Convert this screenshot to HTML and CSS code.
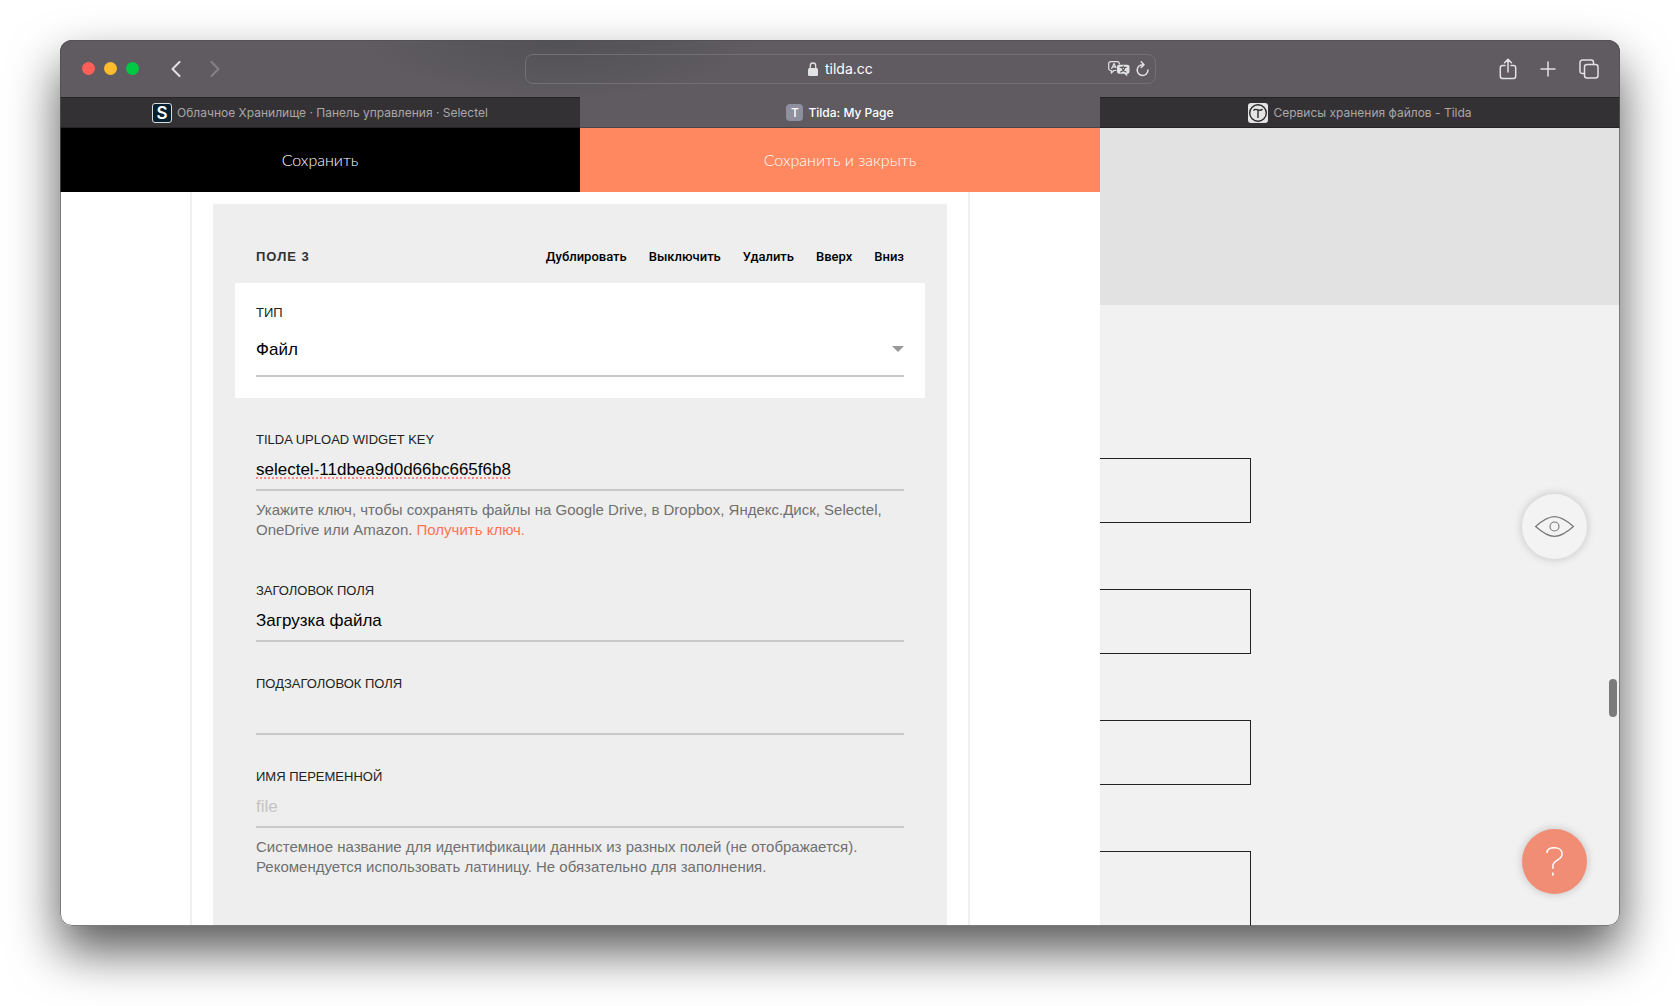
FILE: index.html
```html
<!DOCTYPE html>
<html lang="ru">
<head>
<meta charset="utf-8">
<title>Tilda: My Page</title>
<link rel="stylesheet" href="styles.css">
</head>
<body>
<div class="window">
  <header class="toolbar">
    <div class="toolbar-start">
      <div class="lights">
        <button class="light light-close" aria-label="Закрыть"></button>
        <button class="light light-minimize" aria-label="Свернуть"></button>
        <button class="light light-zoom" aria-label="Развернуть"></button>
      </div>
      <nav class="history">
        <button class="icon-button" aria-label="Назад"><svg width="10" height="16" viewBox="0 0 10 16"><path d="M8.5 1 1.5 8l7 7"/></svg></button>
        <button class="icon-button is-disabled" aria-label="Вперёд"><svg width="10" height="16" viewBox="0 0 10 16"><path d="m1.500 1 7 7-7 7"/></svg></button>
      </nav>
    </div>
    <form class="address">
      <span class="address-side"></span>
      <span class="address-main">
        <svg width="10" height="14" viewBox="0 0 10 14"><rect class="lock-body" y="6" width="10" height="8" rx="1.500"/><path class="lock-arc" d="M2.300 6.500V3.700a2.700 2.700 0 0 1 5.400 0v2.800"/></svg>
        <input class="address-input" type="text" value="tilda.cc" aria-label="Адрес">
      </span>
      <span class="address-side address-tools">
        <button type="button" class="icon-button" aria-label="Перевести"><svg width="22" height="16" viewBox="0 0 22 16"><path class="thin" d="M8 9.500H5.800L3.300 12V9.500H2.700a2 2 0 0 1-2-2V2.700a2 2 0 0 1 2-2h6.600a2 2 0 0 1 2 2V3"/><path class="thin" d="m3.700 7.500 2.300-5 2 4.200M4.500 5.900h3"/><path class="solid" d="M11 3.700h8.500a2 2 0 0 1 2 2v5a2 2 0 0 1-2 2h-.3V15.500l-2.800-2.800H11a2 2 0 0 1-2-2v-5a2 2 0 0 1 2-2z"/><path class="cut" d="M12.200 6.400h6M15.200 5v1.400M17 6.600c-.6 2-2 3.500-4.500 4.400M13.600 6.600c.6 2 2 3.500 4.400 4.400"/></svg></button>
        <button type="button" class="icon-button" aria-label="Обновить"><svg width="13" height="16" viewBox="0 0 13 16"><path class="medium" d="M7 3.700a5.400 5.400 0 1 0 5 5.400M5.200.8 8 3.700 5.200 6.500"/></svg></button>
      </span>
    </form>
    <div class="toolbar-end">
      <button class="icon-button" aria-label="Поделиться"><svg width="18" height="22" viewBox="0 0 18 22"><path class="medium" d="M6 7.500H3.500a2.200 2.200 0 0 0-2.200 2.200v8.600a2.200 2.200 0 0 0 2.200 2.200h11a2.200 2.200 0 0 0 2.200-2.200V9.700a2.200 2.200 0 0 0-2.200-2.200H12M9 14V1.300M5.500 4.700 9 1.200l3.500 3.500"/></svg></button>
      <button class="icon-button" aria-label="Новая вкладка"><svg width="16" height="16" viewBox="0 0 16 16"><path class="medium" d="M8 1v14M1 8h14"/></svg></button>
      <button class="icon-button" aria-label="Все вкладки"><svg width="20" height="20" viewBox="0 0 20 20"><rect class="medium" x="5.500" y="5.500" width="13.500" height="13.500" rx="2.500"/><path class="medium" d="M5.500 14.500H3.300A2.300 2.300 0 0 1 1 12.200V3.300A2.300 2.300 0 0 1 3.300 1h8.900a2.300 2.300 0 0 1 2.300 2.300v2.200"/></svg></button>
    </div>
  </header>

  <nav class="tabs">
    <a class="tab" href="#storage"><span class="favicon favicon-s">S</span>Облачное Хранилище · Панель управления · Selectel</a>
    <a class="tab is-active" href="#page"><span class="favicon favicon-t">T</span>Tilda: My Page</a>
    <a class="tab" href="#help"><svg class="favicon-tilda" width="20" height="20" viewBox="0 0 20 20"><rect class="plate" width="20" height="20" rx="3"/><circle cx="10" cy="10" r="8.300"/><path d="M5.500 7.600c1.500-2 3-1.300 4.500-.7s3 .8 4.500-.6M10 7v8"/></svg>Сервисы хранения файлов - Tilda</a>
  </nav>

  <main class="content">
    <section class="editor">
      <div class="editor-actions">
        <button class="action action-save">Сохранить</button>
        <button class="action action-close">Сохранить и закрыть</button>
      </div>
      <form class="sheet">
        <fieldset class="card">
          <div class="card-head">
            <h2 class="card-title">ПОЛЕ 3</h2>
            <div class="card-menu">
              <button type="button" class="card-link">Дублировать</button>
              <button type="button" class="card-link">Выключить</button>
              <button type="button" class="card-link">Удалить</button>
              <button type="button" class="card-link">Вверх</button>
              <button type="button" class="card-link">Вниз</button>
            </div>
          </div>
          <div class="type-box">
            <label class="label" for="type">ТИП</label>
            <div class="select-wrap">
              <select class="control select" id="type"><option>Файл</option></select>
              <span class="caret"></span>
            </div>
          </div>
          <div class="field">
            <label class="label" for="key">TILDA UPLOAD WIDGET KEY</label>
            <input class="control misspelled" id="key" type="text" value="selectel-11dbea9d0d66bc665f6b8">
            <p class="hint">Укажите ключ, чтобы сохранять файлы на Google Drive, в Dropbox, Яндекс.Диск, Selectel,<br>OneDrive или Amazon. <a class="hint-link" href="#key">Получить ключ.</a></p>
          </div>
          <div class="field">
            <label class="label" for="title">ЗАГОЛОВОК ПОЛЯ</label>
            <input class="control" id="title" type="text" value="Загрузка файла">
          </div>
          <div class="field">
            <label class="label" for="subtitle">ПОДЗАГОЛОВОК ПОЛЯ</label>
            <input class="control" id="subtitle" type="text">
          </div>
          <div class="field">
            <label class="label" for="name">ИМЯ ПЕРЕМЕННОЙ</label>
            <input class="control" id="name" type="text" placeholder="file">
            <p class="hint">Системное название для идентификации данных из разных полей (не отображается).<br>Рекомендуется использовать латиницу. Не обязательно для заполнения.</p>
          </div>
        </fieldset>
      </form>
    </section>

    <section class="preview">
      <div class="preview-cover"></div>
      <div class="preview-form">
        <div class="preview-box"></div>
        <div class="preview-box"></div>
        <div class="preview-box"></div>
        <div class="preview-box is-tall"></div>
      </div>
      <button class="round-button eye-button" aria-label="Просмотр"><svg width="41" height="23" viewBox="0 0 42 24"><path d="M1.300 12C8 6 14.500 1.700 21 1.700S34 6 40.700 12C34 18 27.500 22.300 21 22.300S8 18 1.300 12z"/><circle cx="21" cy="12" r="4.700"/></svg></button>
      <button class="round-button help-button" aria-label="Помощь"><svg width="19" height="31" viewBox="0 0 20 32"><path d="M2 7C2 3.300 5.500 1.500 10 1.500s8 2.500 8 6.500c0 3-2 4.700-4.500 6.200C10 16.300 8.300 18 8.300 20.500V23.500M8.300 27.500v3.500"/></svg></button>
      <div class="scroll-thumb"></div>
    </section>
  </main>
</div>
</body>
</html>
```
FILE: styles.css
```css
* { box-sizing: border-box; }

body {
  margin: 0;
  padding: 40px 60px 80px;
  height: 100vh;
  background: #fff;
  font-family: "Liberation Sans", Arial, sans-serif;
  color: #000;
}

button, input, select { font: inherit; color: inherit; }
button { padding: 0; border: 0; background: none; }
svg { display: block; fill: none; }

.window {
  position: relative;
  display: flex;
  flex-direction: column;
  height: 100%;
  overflow: hidden;
  border-radius: 12px;
  background: #5f5b60;
  box-shadow: 0 25px 50px rgba(0, 0, 0, 0.66);
}
.window::after {
  content: "";
  position: absolute;
  inset: 0;
  border: 1px solid rgba(80, 80, 80, 0.75);
  border-radius: 12px;
  pointer-events: none;
}

/* Browser toolbar */
.toolbar {
  display: grid;
  grid-template-columns: 1fr minmax(0, 631px) 1fr;
  align-items: center;
  flex: none;
  height: 57px;
  padding: 0 21px 0 22px;
  background: radial-gradient(ellipse 190px 60px at 32% 0, #525155, transparent), #5f5b60;
  font-family: Inter, sans-serif;
}
.toolbar-start, .lights, .history, .toolbar-end { display: flex; align-items: center; }
.toolbar-start { gap: 32px; }
.lights { gap: 9px; }
.light { width: 13px; height: 13px; border-radius: 50%; }
.light-close { background: #ff5f57; }
.light-minimize { background: #febc2e; }
.light-zoom { background: #00ca44; }
.history { gap: 29px; }
.icon-button svg { stroke: #e2e1e3; stroke-width: 2; stroke-linecap: round; stroke-linejoin: round; }
.icon-button.is-disabled svg { stroke: #858287; }
.icon-button svg .medium { stroke-width: 1.5; }
.icon-button svg .thin { stroke-width: 1.2; }
.icon-button svg .solid { fill: #e2e1e3; stroke: none; }
.icon-button svg .cut { stroke: #5f5b60; stroke-width: 1.2; }
.toolbar-end { justify-content: flex-end; gap: 23px; }

.address {
  display: grid;
  grid-template-columns: 1fr auto 1fr;
  align-items: center;
  height: 30px;
  padding: 0 6px;
  border: 1px solid #727074;
  border-radius: 8px;
}
.address-main { display: flex; align-items: center; gap: 7px; }
.lock-body { fill: #e2e1e3; }
.lock-arc { stroke: #e2e1e3; stroke-width: 1.3; }
.address-input {
  width: 48px;
  padding: 0;
  border: 0;
  background: none;
  color: #fff;
  font-size: 14px;
}
.address-tools { display: flex; justify-content: flex-end; align-items: center; gap: 6px; }

/* Tab strip */
.tabs {
  display: grid;
  grid-template-columns: repeat(3, 1fr);
  flex: none;
  height: 31px;
  font-family: Inter, sans-serif;
  font-size: 12px;
}
.tab {
  display: flex;
  align-items: center;
  justify-content: center;
  gap: 5px;
  min-width: 0;
  border-top: 1px solid #252326;
  border-bottom: 1px solid #252326;
  background: #343134;
  color: #a9a7aa;
  text-decoration: none;
  white-space: nowrap;
}
.tab.is-active {
  border-top-color: transparent;
  border-bottom-color: #484548;
  background: #5f5b60;
  color: #fff;
  font-weight: 500;
}
.favicon { text-align: center; }
.favicon-s {
  width: 20px;
  height: 20px;
  border: 1px solid #d8dbdc;
  border-radius: 3px;
  background: #06202f;
  color: #fff;
  font-size: 17px;
  font-weight: 600;
  line-height: 18px;
}
.favicon-t {
  width: 17px;
  height: 17px;
  border-radius: 4px;
  background: #8e90a0;
  font-size: 12px;
  line-height: 17px;
}
.favicon-tilda { stroke: #2c2a2c; stroke-width: 1.4; }
.favicon-tilda .plate { fill: #e4e4e4; stroke: none; }

/* Page area */
.content { display: grid; grid-template-columns: 2fr 1fr; flex: 1; min-height: 0; }
.editor { min-height: 0; overflow: hidden; background: #fff; }
.editor-actions { display: grid; grid-template-columns: 1fr 1fr; height: 64px; }
.action {
  padding-bottom: 2px;
  color: #fff;
  font-family: Lato, "Open Sans", sans-serif;
  font-size: 16px;
  font-weight: 300;
}
.action-save { background: #000; }
.action-close { background: #ff8860; }

.sheet {
  width: 75%;
  margin: 0 auto;
  padding: 12px 21px 0;
  border: solid #f0f0f0;
  border-width: 0 2px;
}
.card { margin: 0; padding: 0 22px 80px; border: 0; background: #eee; min-width: 0; }
.card-head {
  display: flex;
  align-items: center;
  justify-content: space-between;
  padding: 43px 21px 16px;
  line-height: 20px;
}
.card-title { margin: 0; color: #333; font-size: 13px; letter-spacing: 1px; }
.card-menu { display: flex; gap: 22px; }
.card-link { font-family: Roboto, sans-serif; font-size: 13px; font-weight: 500; }

.type-box { padding: 20px 21px 21px; background: #fff; }
.field { padding: 32px 21px 0; }
.label { display: block; color: #222; font-size: 13px; line-height: 20px; }
.control {
  display: block;
  width: 100%;
  height: 41px;
  padding: 0;
  border: 0;
  border-bottom: 2px solid #c9c9c9;
  border-radius: 0;
  background: none;
  font-size: 17px;
}
.control::placeholder { color: #c4c4c4; }
.misspelled { text-decoration: underline dotted #f88 2px; text-underline-offset: 3px; }
.select-wrap { position: relative; }
.select { height: 54px; appearance: none; }
.caret {
  position: absolute;
  top: 23px;
  right: 0;
  border: 6px solid transparent;
  border-top-color: #999;
  border-bottom: 0;
  pointer-events: none;
}
.hint { margin: 9px 0; color: #707070; font-size: 15px; line-height: 20px; }
.hint-link { color: #ff7350; text-decoration: none; }

/* Live preview */
.preview { position: relative; min-height: 0; overflow: hidden; background: #f1f1f1; }
.preview-cover { height: 177px; background: #e2e2e2; }
.preview-form { display: grid; gap: 66px; padding-top: 153px; }
.preview-box { width: 29%; height: 65px; border: 1px solid #222; border-left: 0; }
.preview-box.is-tall { height: 160px; }
.round-button {
  position: absolute;
  right: 33px;
  display: grid;
  place-items: center;
  width: 65px;
  height: 65px;
  border-radius: 50%;
  background: #f3f3f3;
  box-shadow: 0 0 10px rgba(0, 0, 0, 0.2);
}
.eye-button { top: calc(50% - 33px); }
.eye-button svg { stroke: #777; stroke-width: 1.2; }
.help-button { bottom: 32px; background: #f18d75; }
.help-button svg { stroke: #fff; stroke-width: 1.6; }
.scroll-thumb {
  position: absolute;
  top: 69%;
  right: 3px;
  width: 8px;
  height: 38px;
  border-radius: 4px;
  background: #7b7b7b;
}
```
